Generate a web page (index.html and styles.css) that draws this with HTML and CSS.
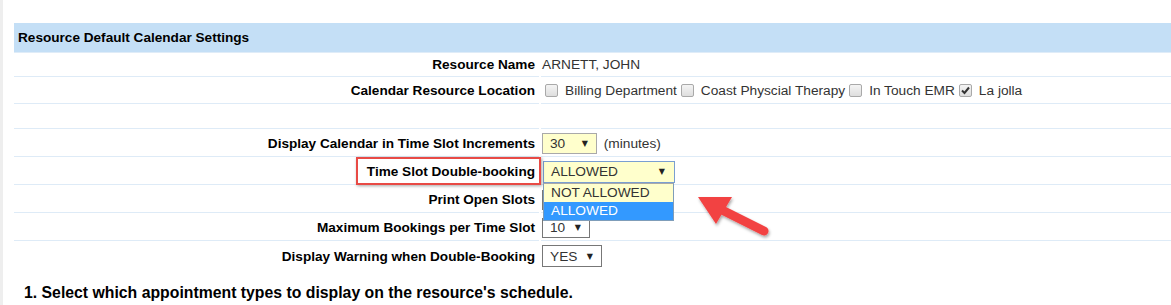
FILE: index.html
```html
<!DOCTYPE html>
<html lang="en">
	<head>
		<meta charset="UTF-8" />
		<title>Resource Default Calendar Settings</title>
		<link rel="stylesheet" href="styles.css">
	</head>
	<body>
		<div class="screen">
			<div class="page">
				<div class="section-title">Resource Default Calendar Settings</div>
				<table class="settings">
					<tr class="r1">
						<td class="label">Resource Name</td>
						<td class="value">ARNETT, JOHN</td>
					</tr>
					<tr class="r2">
						<td class="label">Calendar Resource Location</td>
						<td class="value">
							<span class="locations">
								<span class="check"></span><span class="loc">Billing Department</span>
								<span class="check"></span><span class="loc">Coast Physcial Therapy</span>
								<span class="check"></span><span class="loc">In Touch EMR</span>
								<span class="check checked">
									<svg width="11" height="11" viewBox="0 0 11 11"><path d="M2 5.5 L4.5 8 L9 2.5" fill="none" stroke="#333" stroke-width="2"/></svg>
								</span><span class="loc">La jolla</span>
							</span>
						</td>
					</tr>
					<tr class="r3">
						<td class="label"></td>
						<td class="value"></td>
					</tr>
					<tr class="r4">
						<td class="label">Display Calendar in Time Slot Increments</td>
						<td class="value">
							<span class="select yellow w30">30<span class="caret">▼</span></span>
							<span class="unit">(minutes)</span>
						</td>
					</tr>
					<tr class="r5">
						<td class="label">Time Slot Double-booking</td>
						<td class="value">
							<span class="dropdown">
								<span class="select yellow focused wide">ALLOWED<span class="caret">▼</span></span>
								<span class="menu">
									<span class="option">NOT ALLOWED</span>
									<span class="option active">ALLOWED</span>
								</span>
							</span>
						</td>
					</tr>
					<tr class="r6">
						<td class="label">Print Open Slots</td>
						<td class="value">
							<!-- hidden under the open menu -->
							<span class="select w10"></span>
						</td>
					</tr>
					<tr class="r7">
						<td class="label">Maximum Bookings per Time Slot</td>
						<td class="value">
							<span class="select w10">10<span class="caret">▼</span></span>
						</td>
					</tr>
					<tr class="r8">
						<td class="label">Display Warning when Double-Booking</td>
						<td class="value">
							<span class="select wyes">YES<span class="caret">▼</span></span>
						</td>
					</tr>
				</table>
				<p class="step">1. Select which appointment types to display on the resource's schedule.</p>
			</div>

			<!-- annotations drawn over the screenshot -->
			<div class="callout"></div>
			<svg class="arrow" width="100" height="60" viewBox="0 0 100 60">
				<defs>
					<filter id="shadow" x="-20%" y="-20%" width="150%" height="150%">
						<feDropShadow dx="1" dy="2" stdDeviation="1.5" flood-color="#000" flood-opacity="0.35"/>
					</filter>
				</defs>
				<g filter="url(#shadow)" fill="#f24343" stroke="#f24343">
					<polygon points="8,9 42,9 26,36" stroke="none"/>
					<line x1="30" y1="21" x2="74" y2="43" stroke-width="9" stroke-linecap="round"/>
				</g>
			</svg>
		</div>
	</body>
</html>
```
FILE: styles.css
```css
body {
	margin: 0;
	font-family: 'Liberation Sans', Arial, sans-serif;
	font-size: 13px;
	color: #000;
	background: #fff;
}

.screen {
	position: relative;
	width: 1171px;
	height: 305px;
	overflow: hidden;
}

.page {
	border-left: 3px solid #eeeeee;
	padding: 23px 0 0 11px;
	height: 100%;
	box-sizing: border-box;
}

.section-title {
	background: #c4dff6;
	height: 29px;
	line-height: 30px;
	padding-left: 4px;
	font-weight: bold;
	font-size: 13.6px;
	border-bottom: 1px solid #dfecf8;
}

.settings {
	border-spacing: 2px 0;
	margin: 0 -2px;
	width: calc(100% + 4px);
}

.settings td {
	padding: 0;
	border-bottom: 1px solid #deebf7;
	vertical-align: middle;
}

.settings .label {
	width: 521px;
	padding-right: 4px;
	text-align: right;
	font-weight: bold;
	font-size: 13.6px;
}

.settings .value {
	padding-left: 1px;
	color: #333;
	font-size: 13.7px;
}

.r1 td { height: 23px; }
.r2 td { height: 26px; }
.r3 td { height: 24px; }
.r4 td,
.r5 td,
.r6 td,
.r7 td { height: 25px; padding-top: 2px; }
.r8 td { height: 26px; padding-top: 2px; border-bottom: none; }

.locations {
	display: flex;
	align-items: center;
	padding-top: 1px;
}

.check {
	display: inline-flex;
	align-items: center;
	justify-content: center;
	width: 11px;
	height: 11px;
	margin: 0 7px 0 3px;
	border: 1px solid #a9a9a9;
	border-radius: 2px;
	background: linear-gradient(#f4f4f4, #dedede);
}

.loc {
	margin-right: 1px;
}

.select {
	display: inline-flex;
	align-items: center;
	justify-content: space-between;
	box-sizing: border-box;
	height: 20px;
	padding: 0 8px 0 7px;
	border: 1px solid #777;
	background: #fff;
	color: #333;
	vertical-align: middle;
}

.caret {
	font-family: 'DejaVu Sans', sans-serif;
	font-size: 8px;
	color: #222;
}

.yellow {
	background: #ffffcc;
	border-color: #a9a9a9;
}

.w30 {
	width: 55px;
	height: 21px;
}

.w10 {
	width: 48px;
}

.wyes {
	width: 60px;
	height: 22px;
}

.unit {
	margin-left: 3px;
	vertical-align: middle;
}

.dropdown {
	position: relative;
	display: inline-block;
	margin-left: 1px;
	vertical-align: middle;
}

.wide {
	width: 132px;
	height: 22px;
	padding-right: 9px;
}

.focused {
	border-color: #7a9fd1;
}

.menu {
	position: absolute;
	top: 22px;
	left: 0;
	z-index: 2;
	display: flex;
	flex-direction: column;
	box-sizing: border-box;
	width: 131px;
	border: 1px solid #7f9db9;
	border-top-color: #a9a9a9;
	background: #ffffcc;
}

.option {
	height: 18px;
	line-height: 18px;
	padding-left: 7px;
	color: #333;
}

.option.active {
	background: #3399ff;
	color: #fff;
}

.step {
	margin: 15px 0 0 10px;
	font-weight: bold;
	font-size: 15.8px;
}

.callout {
	position: absolute;
	left: 356px;
	top: 157px;
	width: 185px;
	height: 28px;
	box-sizing: border-box;
	border: 2px solid #e84a45;
	box-shadow: 1px 1px 3px rgba(0, 0, 0, 0.35);
}

.arrow {
	position: absolute;
	left: 690px;
	top: 188px;
}
```
